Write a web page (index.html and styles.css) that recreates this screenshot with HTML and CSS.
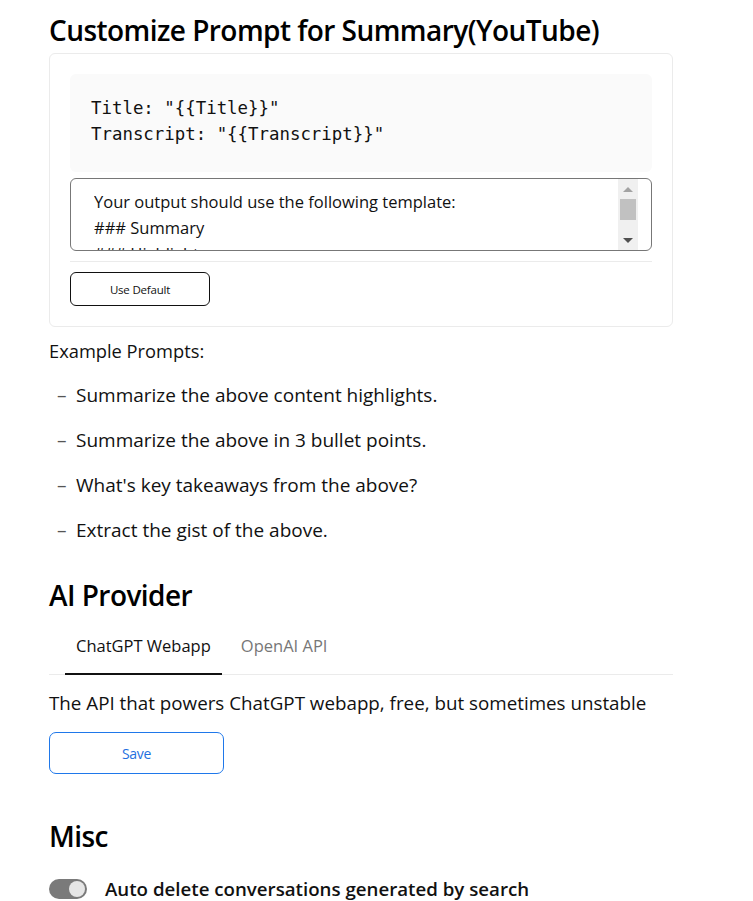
FILE: index.html
```html
<!DOCTYPE html>
<html lang="en">
<head>
<meta charset="utf-8">
<title>Options</title>
<link rel="stylesheet" href="styles.css">
</head>
<body>
<main class="page">
  <h1 class="title">Customize Prompt for Summary(YouTube)</h1>
  <section class="card">
    <pre class="code">Title: "{{Title}}"
Transcript: "{{Transcript}}"</pre>
    <div class="editor">
      <textarea class="editor-input" spellcheck="false">Your output should use the following template:
### Summary
### Highlights
- [Emoji] Bulletpoint

Your task is to summarise the text I have given you in up to seven concise bullet points, starting with a short highlight.</textarea>
      <div class="scrollbar" aria-hidden="true">
        <div class="sb-btn"><span class="arrow-up"></span></div>
        <div class="sb-thumb"></div>
        <div class="sb-track"></div>
        <div class="sb-btn"><span class="arrow-down"></span></div>
      </div>
    </div>
    <div class="divider"></div>
    <button class="btn-default" type="button">Use Default</button>
  </section>

  <p class="examples-label">Example Prompts:</p>
  <ul class="examples">
    <li>Summarize the above content highlights.</li>
    <li>Summarize the above in 3 bullet points.</li>
    <li>What's key takeaways from the above?</li>
    <li>Extract the gist of the above.</li>
  </ul>

  <h1 class="title title-provider">AI Provider</h1>
  <div class="tabs">
    <div class="tab tab-active">ChatGPT Webapp</div>
    <div class="tab">OpenAI API</div>
  </div>
  <p class="desc">The API that powers ChatGPT webapp, free, but sometimes unstable</p>
  <button class="btn-save" type="button">Save</button>

  <h1 class="title title-misc">Misc</h1>
  <label class="toggle-row">
    <span class="toggle"><span class="knob"></span></span>
    <span class="toggle-label">Auto delete conversations generated by search</span>
  </label>
</main>
</body>
</html>
```

FILE: styles.css
```css
html, body {
  margin: 0;
  padding: 0;
  background: #ffffff;
}

body {
  font-family: "Open Sans", "Noto Sans", sans-serif;
  color: #111111;
}

.page {
  width: 624px;
  padding: 0 0 0 49px;
}

.title {
  margin: 0;
  font-size: 28px;
  font-weight: 600;
  line-height: 36px;
  padding-top: 12px;
  letter-spacing: -0.55px;
  color: #000;
}

.card {
  margin-top: 5px;
  border: 1px solid #ebebeb;
  border-radius: 6px;
  padding: 20px 20px 20px 20px;
  height: 232px;
}

.code {
  margin: 0;
  background: #fafafa;
  border-radius: 6px;
  padding: 21px 21px 0 21px;
  height: 77px;
  font-family: "DejaVu Sans Mono", "Liberation Mono", monospace;
  font-size: 17.4px;
  line-height: 26px;
  color: #111;
}

.editor {
  margin-top: 6px;
  border: 1px solid #777;
  border-radius: 6px;
  height: 71px;
  padding: 0 13px 0 23px;
  display: flex;
  overflow: hidden;
}

.editor-input {
  flex: 1;
  border: none;
  outline: none;
  resize: none;
  margin: 0;
  padding: 10px 0 0 0;
  height: 71px;
  box-sizing: border-box;
  font-family: "Open Sans", "Noto Sans", sans-serif;
  font-size: 16.5px;
  line-height: 26px;
  color: #111;
  background: transparent;
  overflow: hidden;
}

.scrollbar {
  width: 20px;
  background: #f0f0f0;
  display: flex;
  flex-direction: column;
}

.sb-btn {
  height: 20px;
  display: flex;
  align-items: center;
  justify-content: center;
}

.arrow-up {
  width: 0;
  height: 0;
  border-left: 5px solid transparent;
  border-right: 5px solid transparent;
  border-bottom: 5px solid #a3a3a3;
}

.arrow-down {
  width: 0;
  height: 0;
  border-left: 5px solid transparent;
  border-right: 5px solid transparent;
  border-top: 5px solid #505050;
}

.sb-thumb {
  height: 21px;
  margin: 0 2px;
  background: #c1c1c1;
}

.sb-track {
  flex: 1;
}

.divider {
  margin-top: 10px;
  height: 1px;
  background: #ebebeb;
}

.btn-default {
  margin-top: 10px;
  width: 140px;
  height: 34px;
  border: 1px solid #111;
  border-radius: 6px;
  background: #fff;
  font-family: "Open Sans", "Noto Sans", sans-serif;
  font-size: 11.5px;
  letter-spacing: -0.2px;
  color: #111;
  padding: 0;
}

.examples-label {
  margin: 12px 0 0 0;
  font-size: 18.3px;
  line-height: 24px;
}

.examples {
  list-style: none;
  margin: 10px 0 0 0;
  padding: 0 0 0 8px;
}

.examples li {
  display: flex;
  font-size: 19px;
  line-height: 45px;
}

.examples li::before {
  content: "–";
  width: 19px;
  color: #555;
}

.title-provider {
  padding-top: 24px;
}

.tabs {
  margin-top: 15px;
  display: flex;
  gap: 8px;
  padding-left: 16px;
  border-bottom: 1px solid #ebebeb;
}

.tab {
  padding: 6px 11px 15px 11px;
  font-size: 16.5px;
  line-height: 24px;
  color: #777;
  border-bottom: 2px solid transparent;
  margin-bottom: -1px;
}

.tab-active {
  color: #111;
  border-bottom-color: #111;
}

.desc {
  margin: 14px 0 0 0;
  font-size: 18.8px;
  line-height: 28px;
}

.btn-save {
  margin-top: 15px;
  width: 175px;
  height: 42px;
  border: 1px solid #1f78ea;
  border-radius: 7px;
  background: #fff;
  color: #1f6fe0;
  font-family: "Open Sans", "Noto Sans", sans-serif;
  font-size: 14px;
  letter-spacing: -0.3px;
  padding: 0;
}

.title-misc {
  padding-top: 44px;
}

.toggle-row {
  display: flex;
  align-items: center;
  gap: 18px;
  margin-top: 22px;
}

.toggle {
  width: 38px;
  height: 20px;
  border-radius: 10px;
  background: #7a7a7a;
  display: flex;
  align-items: center;
  justify-content: flex-end;
  padding: 0 2px;
  box-sizing: border-box;
}

.knob {
  width: 16px;
  height: 16px;
  border-radius: 50%;
  background: #e6e6e6;
}

.toggle-label {
  font-size: 18.7px;
  font-weight: 600;
  line-height: 26px;
}
```
